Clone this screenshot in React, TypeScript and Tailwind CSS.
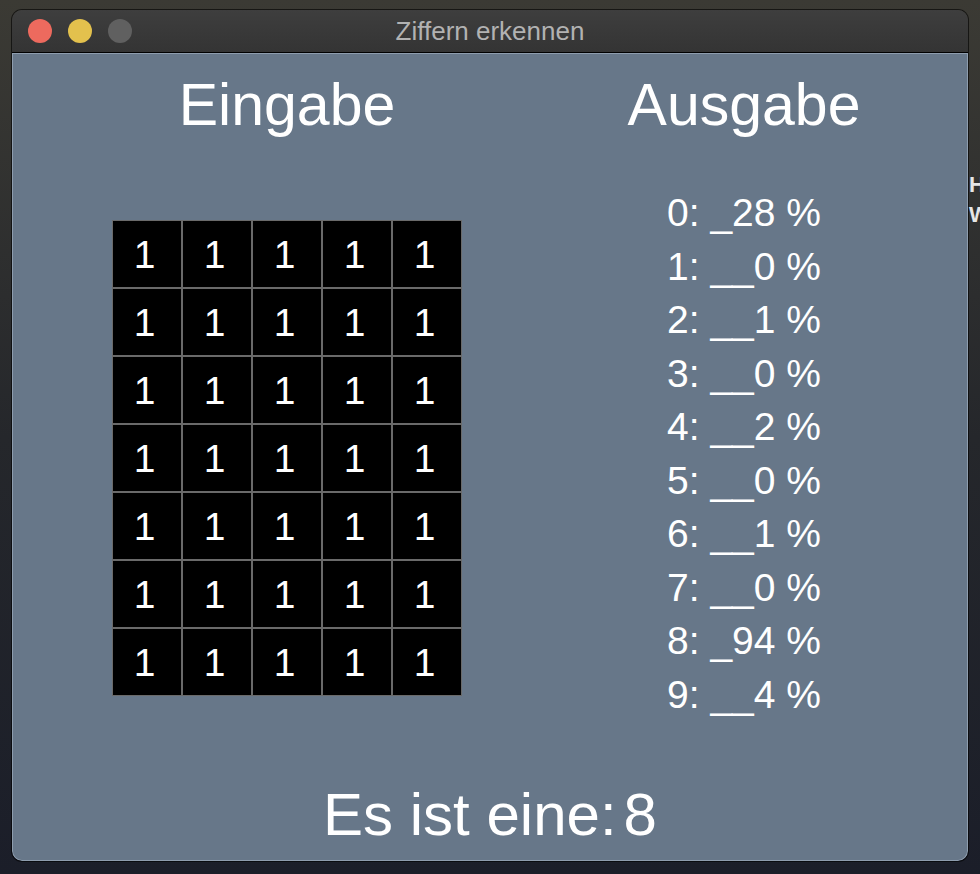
import React from 'react';

const percents = ['_28', '__0', '__1', '__0', '__2', '__0', '__1', '__0', '_94', '__4'];

function TrafficLights() {
  return (
    <div className="flex items-center gap-[16px] pl-[16px]">
      <div className="w-[24px] h-[24px] rounded-full bg-[#ed6a5e]" />
      <div className="w-[24px] h-[24px] rounded-full bg-[#e3c14d]" />
      <div className="w-[24px] h-[24px] rounded-full bg-[#606060]" />
    </div>
  );
}

function InputGrid() {
  const cells = Array.from({ length: 35 }, (_, i) => i);
  return (
    <div className="grid grid-cols-[repeat(5,70px)] grid-rows-[repeat(7,68px)]">
      {cells.map((i) => (
        <div
          key={i}
          className="flex items-center justify-center pr-[5px] bg-black border-[1.5px] border-[#6a6a6a] text-white text-[39px] leading-none"
        >
          1
        </div>
      ))}
    </div>
  );
}

export default function App() {
  return (
    <div
      className="relative w-[980px] h-[874px] overflow-hidden bg-gradient-to-b from-[#3b3a34] via-[#25272b] to-[#1b1e29] pt-[10px] pl-[12px]"
      style={{ fontFamily: '"Liberation Sans", Arial, sans-serif' }}
    >
      {/* bits of the desktop peeking out on the right */}
      <div className="absolute left-[969px] top-[170px] text-[#e6e6e6] text-[22px] font-bold leading-[30px]">
        <div>H</div>
        <div>W</div>
      </div>

      <div className="w-[956px] h-[851px] rounded-[10px] overflow-hidden flex flex-col shadow-[0_0_0_1px_rgba(0,0,0,0.6)]">
        {/* title bar */}
        <div className="relative h-[43px] flex items-center bg-gradient-to-b from-[#3e3e3e] to-[#343434] border-b border-black">
          <TrafficLights />
          <div className="absolute inset-0 flex items-center justify-center text-[#b2b2b2] text-[26px]">
            Ziffern erkennen
          </div>
        </div>

        {/* content */}
        <div className="flex-1 flex flex-col bg-[#677789] text-white shadow-[inset_0_0_0_1px_rgba(190,205,220,0.45)] rounded-b-[10px]">
          <div className="flex pt-[22px]">
            <div className="w-[550px] flex flex-col items-center">
              <h1 className="text-[59px] leading-[60px]">Eingabe</h1>
              <div className="mt-[85px]">
                <InputGrid />
              </div>
            </div>
            <div className="w-[364px] flex flex-col items-center">
              <h1 className="text-[59px] leading-[60px]">Ausgabe</h1>
              <div className="mt-[51px] flex flex-col">
                {percents.map((p, i) => (
                  <div key={i} className="text-[39px] leading-[53.5px] whitespace-pre">
                    {i}: {p} %
                  </div>
                ))}
              </div>
            </div>
          </div>

          <div className="mt-auto pb-[16px] flex justify-center gap-[7px] text-[60px] leading-[60px]">
            <span>Es ist eine:</span>
            <span>8</span>
          </div>
        </div>
      </div>
    </div>
  );
}
